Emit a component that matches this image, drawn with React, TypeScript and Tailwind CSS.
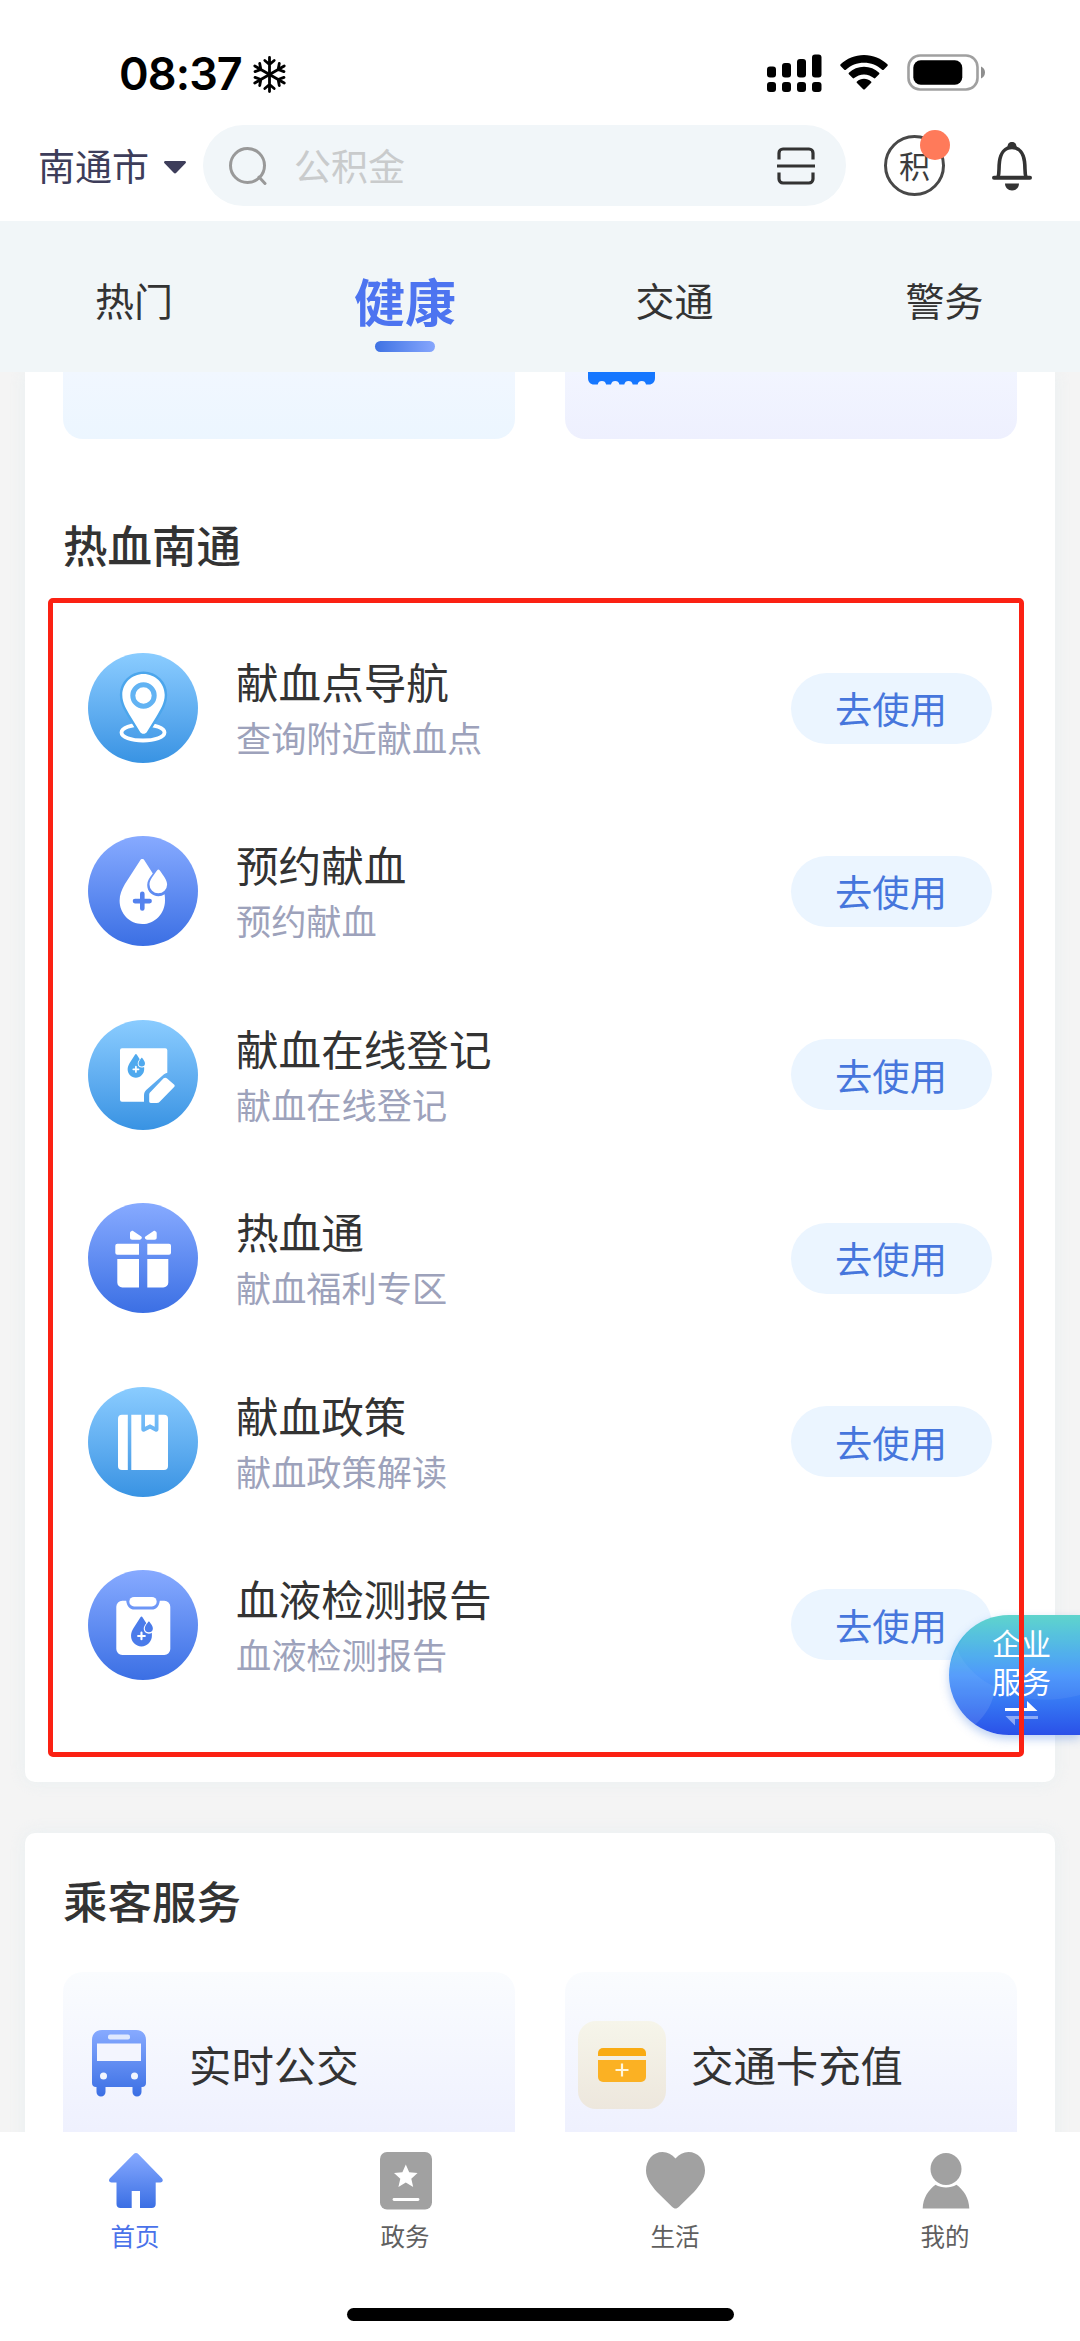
import type { ReactNode } from "react";

const PlusDrop = ({ fill, plus }: { fill: string; plus: string }) => (
  <g>
    <path
      d="M54.3 23c.9 0 1.6.5 2.2 1.4l8.3 13.2c-3.300 4-5.600 7.600-5.600 11.400 0 6.500 4.900 11.200 11.200 11.200 2.300 0 4.500-.7 6.200-1.900.3 1.800.4 4 .4 6.100 0 13.200-10.200 23.600-22.700 23.600S31.600 77.600 31.600 64.800c0-6.200 2.200-11.300 5.200-16.500l15.300-23.900c.6-.9 1.300-1.400 2.200-1.400z"
      fill={fill}
    />
    <path d="M70.400 33.500c.5 0 .9.3 1.200.8 3.500 5 7.500 9.800 7.500 14.200a8.800 8.800 0 0 1-17.600 0c0-4.400 4.200-9.200 7.700-14.200.3-.5.7-.8 1.200-.8z" fill={fill} />
    <path d="M54.300 57.800v14.600M47 65.100h14.600" stroke={plus} strokeWidth="4.600" strokeLinecap="round" />
  </g>
);

const PinGlyph = () => (
  <>
    <ellipse cx="55" cy="79.500" rx="21.500" ry="8" fill="none" stroke="#fff" strokeWidth="3.800" />
    <path d="M55.500 21c-11.700 0-21.200 9.300-21.200 21 0 8 4.200 14.500 8.300 21.500l9.400 15.200c1.700 2.700 5.300 2.700 7 0l9.400-15.200c4.100-7 8.300-13.500 8.300-21.500 0-11.700-9.500-21-21.200-21z" fill="#fff" stroke="#4ca6ec" strokeWidth="5" paintOrder="stroke" />
    <circle cx="55.500" cy="42.500" r="10.700" fill="none" stroke="#62b3f3" strokeWidth="5" />
  </>
);

const FormGlyph = () => (
  <>
    <path d="M34 28.200h43.300a2 2 0 0 1 2 2v22.600c-1.500.3-2.600.9-3.600 1.800L58.500 69.800c-1.700 1.600-2.500 3.300-2.500 5.500v6.500H34a2 2 0 0 1-2-2V30.200a2 2 0 0 1 2-2z" fill="#fff" />
    <path d="M75.600 58.300c1-.9 2.200-.9 3.200 0l7.200 6.100c.9.800.9 1.700.1 2.500L71.700 81.700c-.8.800-1.500 1.200-2.600 1.200h-6.300c-1 0-1.600-.6-1.600-1.600v-6.300c0-1.200.4-2.100 1.300-2.900z" fill="#fff" />
    <g transform="translate(28.100 25.600) scale(.365)">
      <PlusDrop fill="#4fa9ee" plus="#fff" />
    </g>
  </>
);

const GiftGlyph = () => (
  <g fill="#fff">
    <path d="M43.600 28c.5-.3 1-.3 1.500 0l7.800 5.300c1 .7 1.200 1.300.7 2.300-.3.700-.9 1.100-1.800 1.100h-7.600c-1.400 0-2.200-.7-2.200-2.200v-4.500c0-.9.700-1.500 1.600-2zM67.100 28c-.5-.3-1-.3-1.500 0l-7.800 5.300c-1 .7-1.200 1.300-.7 2.300.3.700.9 1.100 1.800 1.100h7.600c1.400 0 2.200-.7 2.200-2.200v-4.500c0-.9-.7-1.500-1.600-2z" />
    <path d="M29.300 40.700H51v11.100H29.300a2 2 0 0 1-2-2v-7.100a2 2 0 0 1 2-2zM59.300 40.700H81a2 2 0 0 1 2 2v7.100a2 2 0 0 1-2 2H59.300z" />
    <path d="M29.300 56H51v28.500H34.300a5 5 0 0 1-5-5zM59.300 56h21v23.500a5 5 0 0 1-5 5h-16z" />
  </g>
);

const BookGlyph = () => (
  <g fill="#fff">
    <path d="M34 27.700h5.800V83H34a4 4 0 0 1-4-4V31.700a4 4 0 0 1 4-4z" />
    <path d="M43.300 27.700h10v14.600c0 2 1.700 3 3.300 2.100l5.400-2.700 5.200 2.700c1.600.9 3.300-.1 3.300-2.100V27.700H76a4 4 0 0 1 4 4V79a4 4 0 0 1-4 4H43.300z" />
    <path d="M57 27.700h9.700v12.100L62 37.300l-5 2.500z" />
  </g>
);

const ReportGlyph = () => (
  <>
    <path d="M34.300 30.800h3.900c.8 5.500 3.500 8.800 8.300 8.800h17.200c4.800 0 7.300-3.300 8.100-8.800h4.500a6 6 0 0 1 6 6V79a6 6 0 0 1-6 6h-42a6 6 0 0 1-6-6V36.800a6 6 0 0 1 6-6z" fill="#fff" />
    <rect x="41.300" y="26.900" width="27.400" height="9.500" rx="4.750" fill="#fff" />
    <g transform="translate(28.500 36) scale(.46)">
      <PlusDrop fill="#4a7bea" plus="#fff" />
    </g>
  </>
);

const services: { title: string; desc: string; glyph: ReactNode }[] = [
  { title: "献血点导航", desc: "查询附近献血点", glyph: <PinGlyph /> },
  { title: "预约献血", desc: "预约献血", glyph: <PlusDrop fill="#fff" plus="#5482ee" /> },
  { title: "献血在线登记", desc: "献血在线登记", glyph: <FormGlyph /> },
  { title: "热血通", desc: "献血福利专区", glyph: <GiftGlyph /> },
  { title: "献血政策", desc: "献血政策解读", glyph: <BookGlyph /> },
  { title: "血液检测报告", desc: "血液检测报告", glyph: <ReportGlyph /> },
];

const StatusBar = () => (
  <div className="flex h-[125px] items-start pt-[50px] pl-[119px]">
    <span className="w-[134px] font-['Inter'] text-[45px] leading-[48px] font-semibold tracking-[-0.9px] text-black">08:37</span>
    <svg className="mt-[6px]" width="33" height="37" viewBox="0 0 33 37" fill="none" stroke="#000" strokeWidth="2.800" strokeLinecap="round" strokeLinejoin="round">
      {[0, 60, 120, 180, 240, 300].map((deg) => (
        <path key={deg} d="M16.500 18.500V1.500M11.800 4.500l4.700 4 4.700-4" transform={`rotate(${deg} 16.500 18.500)`} />
      ))}
    </svg>
    <svg className="mt-[4px] ml-[481px]" width="55" height="40" viewBox="0 0 55 40">
      <rect x="0" y="12.500" width="9" height="11" rx="3" />
      <rect x="15" y="9" width="9" height="14.500" rx="3" />
      <rect x="30" y="5" width="9" height="18.500" rx="3" />
      <rect x="45" y="0.500" width="9.500" height="23" rx="3" />
      <rect x="0" y="28" width="9" height="10" rx="3" />
      <rect x="15" y="28" width="9" height="10" rx="3" />
      <rect x="30" y="28" width="9" height="10" rx="3" />
      <rect x="45" y="28" width="9.500" height="10" rx="3" />
    </svg>
    <svg className="mt-[4px] ml-[17px]" width="50" height="37" viewBox="0 0 50 37">
      <path d="M25 1c9 0 17.300 3.500 23.400 9.300.5.500.5 1.200 0 1.700l-3.700 3.800c-.4.400-1.100.4-1.600 0C38.300 11.300 31.900 8.700 25 8.700S11.700 11.300 6.900 15.800c-.5.4-1.200.4-1.600 0L1.600 12c-.5-.5-.5-1.200 0-1.700C7.700 4.500 16 1 25 1z" />
      <path d="M25 12.800c5.800 0 11.100 2.200 15.100 5.900.5.500.5 1.100 0 1.600l-3.800 3.800c-.4.400-1.100.4-1.500 0-2.600-2.300-6-3.700-9.800-3.700s-7.200 1.400-9.800 3.700c-.4.400-1.100.4-1.500 0l-3.800-3.800c-.5-.5-.5-1.100 0-1.600 4-3.700 9.300-5.900 15.100-5.900z" />
      <path d="M25 24.800c2.700 0 5.100 1 7 2.600.5.400.5 1.100 0 1.600l-6.200 6.200c-.4.500-1.100.5-1.600 0L18 29c-.5-.5-.5-1.200 0-1.600 1.900-1.600 4.300-2.600 7-2.600z" />
    </svg>
    <svg className="mt-[4px] ml-[18px]" width="80" height="37" viewBox="0 0 80 37">
      <rect x="1.500" y="1.500" width="69" height="34" rx="11.500" fill="none" stroke="#a0a0a0" strokeWidth="2.600" />
      <rect x="6.300" y="6.300" width="49" height="24.500" rx="7.500" />
      <path d="M74 12.500c2.400.8 4 3.200 4 6s-1.600 5.200-4 6z" fill="#8e8e8e" />
    </svg>
  </div>
);

const SearchRow = () => (
  <div className="flex h-[96px] items-start">
    <div className="flex h-[81px] w-[203px] items-center pl-[38px]">
      <span className="mb-[2px] w-[126px] text-[37px] leading-[40px] text-[#3d3d5a]">南通市</span>
      <svg className="mt-[3px]" width="22" height="13" viewBox="0 0 22 13" fill="#3d3d5a">
        <path d="M1.500 0h19c1.300 0 2 1.300 1 2.300l-9.200 9.500c-.8.800-1.800.8-2.600 0L.500 2.300C-.5 1.300.200 0 1.500 0z" />
      </svg>
    </div>
    <div className="flex h-[81px] w-[643px] items-center rounded-full bg-[#f1f6f9] pr-[31px] pl-[26px]">
      <svg width="38" height="38" viewBox="0 0 38 38" fill="none" stroke="#999" strokeWidth="3">
        <circle cx="18.500" cy="18.500" r="17" />
        <path d="m30 30 6 6.500" strokeLinecap="round" />
      </svg>
      <span className="mb-[2px] ml-[27px] flex-1 text-[37px] leading-[40px] text-[#c9cbcc]">公积金</span>
      <svg width="38" height="38" viewBox="0 0 38 38" fill="none" stroke="#333" strokeWidth="3.200">
        <path d="M2 12.500V6a4 4 0 0 1 4-4h26a4 4 0 0 1 4 4v6.500M2 25.500V32a4 4 0 0 0 4 4h26a4 4 0 0 0 4-4v-6.500M0 19h38" />
      </svg>
    </div>
    <div className="relative mt-[10px] ml-[38px] flex size-[61px] items-center justify-center rounded-full border-[3.5px] border-[#484848]">
      <span className="mb-[2px] text-[31px] leading-[31px] text-[#3c3c3c]">积</span>
      <span className="absolute -top-[8px] -right-[8px] size-[30px] rounded-full bg-[#ff7a5a]" />
    </div>
    <svg className="mt-[15px] ml-[47px]" width="40" height="51" viewBox="0 0 40 51">
      <path d="M6 37.500c1.600-5 .6-9.500 1.500-16C8.500 13 13 7.500 20 7.500S31.500 13 32.500 21.500c.9 6.500-.1 11 1.500 16" fill="none" stroke="#333" strokeWidth="3.600" />
      <path d="M15.200 8C15.600 3.500 17.200 2 20 2s4.400 1.500 4.800 6z" fill="#333" />
      <path d="M2 37.800h36" stroke="#333" strokeWidth="4" strokeLinecap="round" />
      <path d="M13 43.500h14c0 4-3 7-7 7s-7-3-7-7z" fill="#333" />
    </svg>
  </div>
);

const Tabs = () => (
  <div className="grid h-[151px] grid-cols-4 bg-[#f1f6f8] text-center text-[#333]">
    <span className="pt-[53px] pr-[2px] text-[39px] leading-[50px]">热门</span>
    <div className="flex flex-col items-center pt-[49px]">
      <span className="text-[51px] leading-[60px] font-bold text-[#4d74f0]">健康</span>
      <span className="mt-[11px] h-[11px] w-[60px] rounded-full bg-linear-to-r from-[#3f72e3] to-[#86a6fd]" />
    </div>
    <span className="pt-[53px] pr-[1px] text-[39px] leading-[50px]">交通</span>
    <span className="pt-[53px] pr-[1px] text-[39px] leading-[50px]">警务</span>
  </div>
);

const ServiceRow = ({ title, desc, glyph, odd }: { title: string; desc: string; glyph: ReactNode; odd: boolean }) => (
  <li className="flex h-[110px] items-center">
    <div className={odd ? "size-[110px] rounded-full bg-linear-to-b from-[#8accff] to-[#3893e3]" : "size-[110px] rounded-full bg-linear-to-b from-[#87aaff] to-[#3b6fe4]"}>
      <svg width="110" height="110" viewBox="0 0 110 110">{glyph}</svg>
    </div>
    <div className="ml-[38px] flex flex-1 flex-col">
      <span className="text-[42.600px] leading-[58px] text-[#333]">{title}</span>
      <span className="text-[35.200px] leading-[54px] text-[#9da2bb]">{desc}</span>
    </div>
    <button className="h-[71px] w-[201px] rounded-full bg-[#ebf5ff] pr-[1px] text-[37.300px] leading-[64px] text-[#4676dc]">
      去使用
    </button>
  </li>
);

const BusIcon = () => (
  <svg className="mb-[4px]" width="54" height="67" viewBox="0 0 54 67">
    <defs>
      <linearGradient id="bus" x1="0" y1="0" x2="0" y2="1">
        <stop offset="0" stopColor="#87aaff" />
        <stop offset="1" stopColor="#3b6fe4" />
      </linearGradient>
    </defs>
    <path d="M10 0h34c6 0 10 4 10 10v43c0 2.500-1.500 4-4 4h-.5v5a4.500 4.500 0 0 1-9 0v-5h-27v5a4.500 4.500 0 0 1-9 0v-5H4c-2.500 0-4-1.500-4-4V10C0 4 4 0 10 0z" fill="url(#bus)" />
    <rect x="16" y="4.500" width="22" height="5" rx="2" fill="#dfe8fe" />
    <path d="M5 13.500h44V31H5z" fill="#f3f5fe" />
    <circle cx="11.500" cy="46" r="3.500" fill="#f3f5fe" />
    <circle cx="42.500" cy="46" r="3.500" fill="#f3f5fe" />
  </svg>
);

const CardIcon = () => (
  <div className="flex size-[88px] items-center justify-center rounded-[18px] bg-linear-to-b from-[#f6f5ea] to-[#ede7dd]">
    <svg width="48" height="34" viewBox="0 0 48 34">
      <path d="M5 0h38a5 5 0 0 1 5 5v3H0V5a5 5 0 0 1 5-5z" fill="#f9ab13" />
      <path d="M0 12h48v17a5 5 0 0 1-5 5H5a5 5 0 0 1-5-5z" fill="#fbb123" />
      <path d="M24 15.500v13M17.500 22h13" stroke="#fff6dc" strokeWidth="2.200" />
    </svg>
  </div>
);

const NavItem = ({ label, active, children }: { label: string; active?: boolean; children: ReactNode }) => (
  <div className="flex flex-col items-center pt-[20px]">
    <svg width="60" height="58" viewBox="0 0 60 58" fill="#a1a1a1">{children}</svg>
    <span className={active ? "mt-[9px] text-[24.500px] leading-[34px] text-[#4a72ea]" : "mt-[9px] text-[24.500px] leading-[34px] text-[#606060]"}>{label}</span>
  </div>
);

const BottomNav = () => (
  <nav className="h-[209px] bg-white">
    <div className="grid h-[176px] grid-cols-4">
      <NavItem label="首页" active>
        <defs>
          <linearGradient id="home" x1="0" y1="0" x2="0" y2="1">
            <stop offset="0" stopColor="#87aaff" />
            <stop offset="1" stopColor="#3b6fe4" />
          </linearGradient>
        </defs>
        <path d="M28.500 2.300c1.600-1.600 3.400-1.600 5 0l23.400 24c1.600 1.700.9 4.200-1.600 4.200h-4.600V52c0 2.500-1.500 4-4 4H35V39h-8.300v17H15.500c-2.500 0-4-1.500-4-4V30.500h-5c-2.500 0-3.200-2.500-1.600-4.200z" fill="url(#home)" />
      </NavItem>
      <NavItem label="政务">
        <rect x="5" width="52" height="57.500" rx="7" />
        <path d="m30.800 12.500 3.400 7.800 8.400.8-6.300 5.600 1.900 8.300-7.400-4.400-7.400 4.400 1.900-8.300-6.300-5.600 8.400-.8z" fill="#fff" />
        <path d="M19 47.500h24" stroke="#fff" strokeWidth="2.800" strokeLinecap="round" />
      </NavItem>
      <NavItem label="生活">
        <path d="M30.500 6.500C34 2.300 38.500 0 43.500 0 53 0 60 8 60 18.500c0 8-5 14.500-11 21.500L34 54.700c-2.500 2.400-4.500 2.400-7 0L12 40C6 33 1 26.500 1 18.500 1 8 8 0 17.500 0c5 0 9.500 2.300 13 6.500z" />
      </NavItem>
      <NavItem label="我的">
        <ellipse cx="31" cy="17" rx="15.500" ry="16" />
        <path d="M20.500 32.800c3.200 1.800 6.800 2.700 10.500 2.700s7.300-.9 10.500-2.700C48.500 38 54 46 54.300 56.500H7.700C8 46 13.500 38 20.500 32.800z" />
      </NavItem>
    </div>
    <div className="mx-auto h-[13px] w-[387px] rounded-full bg-black" />
  </nav>
);

const EnterpriseButton = () => (
  <div className="absolute top-[1615px] right-0 flex h-[120px] w-[131px] flex-col overflow-hidden rounded-l-[60px] bg-linear-to-b from-[#55d2c9] via-[#4593fb] via-50% to-[#2b50e8] pt-[8px] pl-[43px] text-[29.500px] leading-[38px] text-white shadow-[0_4px_10px_rgba(60,120,220,0.35)]">
    <svg className="absolute inset-0" width="131" height="120" viewBox="0 0 131 120" fill="#fff">
      <path d="M0 60C0 50 3 42 8 34c8 18 22 30 38 38-1 15-9 28-20 38C9 98 0 80 0 60z" fillOpacity=".1" />
      <path d="M8 34C22 5 40 0 60 0h71v80c-30 8-60 6-85-8C30 64 16 52 8 34z" fillOpacity=".06" />
    </svg>
    <span className="relative">企业</span>
    <span className="relative">服务</span>
    <svg className="absolute top-[86px] left-[56px]" width="33" height="25" viewBox="0 0 33 25" fill="#fff">
      <path d="M0 7h22V0l10.500 10H0z" />
      <path d="M33 15H.5L10 24.500V18h23z" fillOpacity=".45" />
    </svg>
  </div>
);

const App = () => {
  return (
    <div className="relative flex h-[2341px] w-[1080px] flex-col overflow-hidden bg-white font-['Noto_Sans_CJK_SC',sans-serif]">
      <StatusBar />
      <SearchRow />
      <Tabs />
      <main className="h-[1760px] overflow-hidden bg-[#f4f4f4] px-[25px]">
        <section className="h-[1410px] rounded-b-[10px] bg-white px-[38px] shadow-[0_0_16px_rgba(225,236,240,0.6)]">
          <div className="grid grid-cols-2 gap-[50px]">
            <div className="h-[67px] rounded-b-[20px] bg-linear-to-b from-[#f1f7ff] to-[#ecf6ff]" />
            <div className="h-[67px] rounded-b-[20px] bg-linear-to-b from-[#f2f5ff] to-[#eef0fe] pl-[23px]">
              <svg width="67" height="13" viewBox="0 0 67 13" fill="#1677ff">
                <path d="M0 0h67v6c0 4-2.500 6.500-6 6.500h-3a4.300 4.300 0 0 0-8.400 0h-4.900a4.300 4.300 0 0 0-8.400 0h-4.900a4.300 4.300 0 0 0-8.400 0h-4.900a4.300 4.300 0 0 0-8.400 0H6C2.500 12.500 0 10 0 6z" />
              </svg>
            </div>
          </div>
          <h2 className="mt-[75px] text-[44.500px] leading-[60px] font-medium text-[#333]">热血南通</h2>
          <ul className="mt-[79px] flex flex-col gap-[73.400px] pr-[25px] pl-[25px]">
            {services.map((s, i) => (
              <ServiceRow key={s.title} {...s} odd={i % 2 === 0} />
            ))}
          </ul>
        </section>
        <section className="mt-[51px] h-[340px] rounded-t-[10px] bg-white px-[38px] pt-[37px] shadow-[0_0_16px_rgba(225,236,240,0.6)]">
          <h2 className="text-[44.500px] leading-[60px] font-medium text-[#333]">乘客服务</h2>
          <div className="mt-[42px] grid grid-cols-2 gap-[50px] text-[42.400px] text-[#333]">
            <div className="flex h-[186px] items-center rounded-[20px] bg-linear-to-b from-[#fafcfe] to-[#edeffe] pl-[29px]">
              <BusIcon />
              <span className="mb-[3px] ml-[43px]">实时公交</span>
            </div>
            <div className="flex h-[186px] items-center rounded-[20px] bg-linear-to-b from-[#fafcfe] to-[#edeffe] pl-[13px]">
              <CardIcon />
              <span className="mb-[3px] ml-[25px]">交通卡充值</span>
            </div>
          </div>
        </section>
      </main>
      <BottomNav />
      <EnterpriseButton />
      <div className="pointer-events-none absolute top-[598px] left-[48px] h-[1159px] w-[976px] rounded-[5px] border-[5px] border-[#fb2113]" />
    </div>
  );
};

export default App;
